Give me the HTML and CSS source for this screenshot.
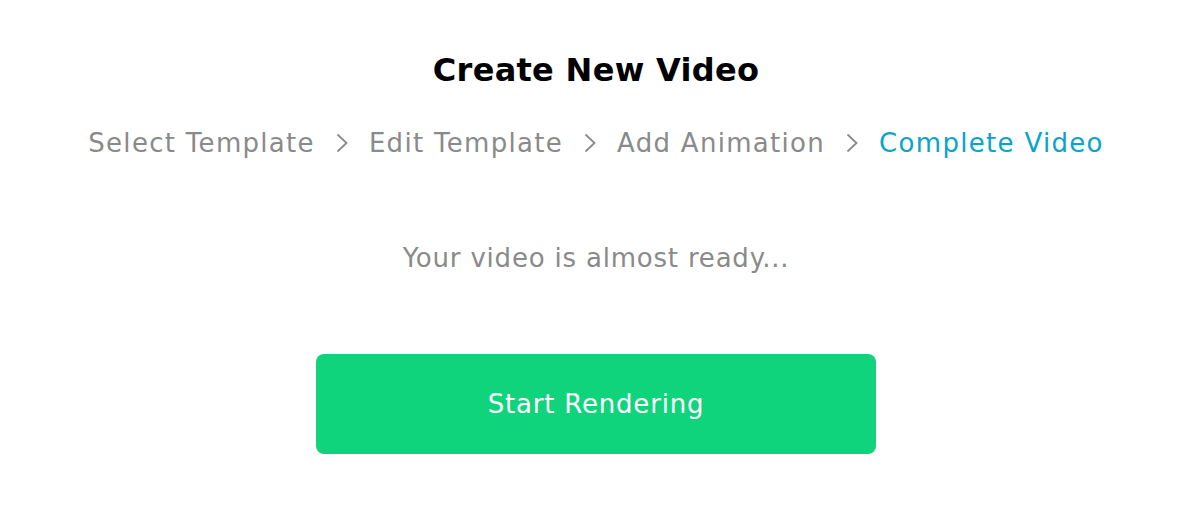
FILE: index.html
```html
<!DOCTYPE html>
<html>
<head>
<meta charset="utf-8">
<link rel="stylesheet" href="styles.css">
</head>
<body>
<main class="page">
  <h1 class="title">Create New Video</h1>
  <nav class="steps">
    <span class="step">Select Template</span>
    <svg class="chev" viewBox="0 0 12 20" width="12" height="20"><path d="M1.5 1.5 L10.5 10 L1.5 18.5" fill="none" stroke="#8a8a8a" stroke-width="1.8"/></svg>
    <span class="step">Edit Template</span>
    <svg class="chev" viewBox="0 0 12 20" width="12" height="20"><path d="M1.5 1.5 L10.5 10 L1.5 18.5" fill="none" stroke="#8a8a8a" stroke-width="1.8"/></svg>
    <span class="step">Add Animation</span>
    <svg class="chev" viewBox="0 0 12 20" width="12" height="20"><path d="M1.5 1.5 L10.5 10 L1.5 18.5" fill="none" stroke="#8a8a8a" stroke-width="1.8"/></svg>
    <span class="step active">Complete Video</span>
  </nav>
  <p class="message">Your video is almost ready...</p>
  <button class="render">Start Rendering</button>
</main>
</body>
</html>
```

FILE: styles.css
```css
html, body {
  margin: 0;
  padding: 0;
  background: #ffffff;
}
.page {
  width: 1192px;
  height: 506px;
  display: flex;
  flex-direction: column;
  align-items: center;
  font-family: "DejaVu Sans", "Open Sans", sans-serif;
}
.title {
  margin: 50px 0 0;
  font-size: 32px;
  line-height: 40px;
  font-weight: 700;
  letter-spacing: 0.3px;
  color: #000;
}
.steps {
  margin-top: 33px;
  display: flex;
  align-items: center;
  gap: 21px;
  height: 40px;
}
.step {
  font-size: 26px;
  line-height: 40px;
  letter-spacing: 1.3px;
  color: #8a8a8a;
}
.step.active {
  color: #0aa3cb;
}
.chev {
  display: block;
}
.message {
  margin: 75px 0 0;
  font-size: 26px;
  line-height: 40px;
  letter-spacing: 0.8px;
  color: #8a8a8a;
}
.render {
  margin-top: 76px;
  width: 560px;
  height: 100px;
  border: 0;
  border-radius: 8px;
  background: #0fd47c;
  color: #fff;
  font-family: inherit;
  font-size: 26px;
  letter-spacing: 0.8px;
  cursor: pointer;
}
```
